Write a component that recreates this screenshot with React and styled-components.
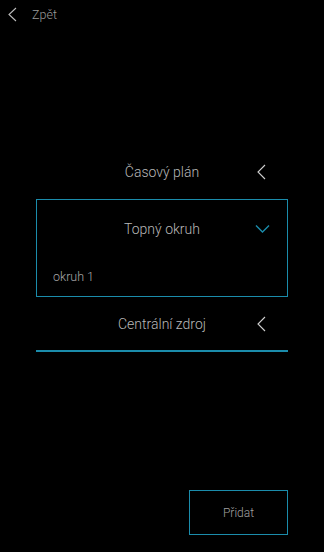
import React from 'react';
import styled, { createGlobalStyle } from 'styled-components';

const GlobalStyle = createGlobalStyle`
  html, body {
    margin: 0;
    padding: 0;
    background: #000;
  }
  body {
    font-family: Roboto, "Noto Sans", sans-serif;
    font-weight: 300;
  }
`;

const accent = '#1b8cab';

const Page = styled.div`
  width: 324px;
  height: 552px;
  background: #000;
  display: flex;
  flex-direction: column;
  box-sizing: border-box;
`;

const TopBar = styled.div`
  height: 28px;
  display: flex;
  align-items: center;
  padding-left: 8px;
  gap: 15px;
  color: #9a9a9a;
  font-size: 12.5px;
`;

const List = styled.div`
  margin: 116px 36px 0 36px;
  display: flex;
  flex-direction: column;
`;

const Row = styled.div`
  height: ${p => p.$h || 55}px;
  display: flex;
  align-items: center;
  position: relative;
  color: #b8b8b8;
  font-size: 14px;
  justify-content: center;
  border-bottom: ${p => (p.$underline ? `2px solid ${accent}` : 'none')};
  box-sizing: border-box;
`;

const Icon = styled.span`
  position: absolute;
  right: ${p => p.$right}px;
  top: 50%;
  transform: translateY(-50%);
  display: flex;
`;

const Expanded = styled.div`
  border: 1px solid ${accent};
  display: flex;
  flex-direction: column;
`;

const Item = styled.div`
  height: 39px;
  display: flex;
  align-items: center;
  padding-left: 16px;
  color: #a8a8a8;
  font-size: 12.5px;
`;

const Footer = styled.div`
  margin-top: auto;
  display: flex;
  justify-content: flex-end;
  padding: 0 36px 17px 0;
`;

const AddButton = styled.button`
  width: 99px;
  height: 45px;
  background: #000;
  border: 1px solid ${accent};
  color: #a0a0a0;
  font-family: Roboto, sans-serif;
  font-weight: 300;
  font-size: 12px;
  cursor: pointer;
`;

const ChevronLeft = ({ color = '#d0d0d0', w = 9, h = 16 }) => (
  <svg width={w} height={h} viewBox={`0 0 ${w} ${h}`} fill="none">
    <path d={`M${w - 1} 1L1 ${h / 2}L${w - 1} ${h - 1}`} stroke={color} strokeWidth="1.1" />
  </svg>
);

const ChevronDown = () => (
  <svg width="15" height="9" viewBox="0 0 15 9" fill="none">
    <path d="M1 1L7.5 7.5L14 1" stroke={accent} strokeWidth="1.4" />
  </svg>
);

export default function App() {
  return (
    <Page>
      <GlobalStyle />
      <TopBar>
        <ChevronLeft color="#bdbdbd" w={9} h={15} />
        <span>Zpět</span>
      </TopBar>
      <List>
        <Row $h={55}>
          Časový plán
          <Icon $right={22}><ChevronLeft /></Icon>
        </Row>
        <Expanded>
          <Row $h={57}>
            Topný okruh
            <Icon $right={17}><ChevronDown /></Icon>
          </Row>
          <Item>okruh 1</Item>
        </Expanded>
        <Row $h={55} $underline>
          Centrální zdroj
          <Icon $right={22}><ChevronLeft /></Icon>
        </Row>
      </List>
      <Footer>
        <AddButton>Přidat</AddButton>
      </Footer>
    </Page>
  );
}
